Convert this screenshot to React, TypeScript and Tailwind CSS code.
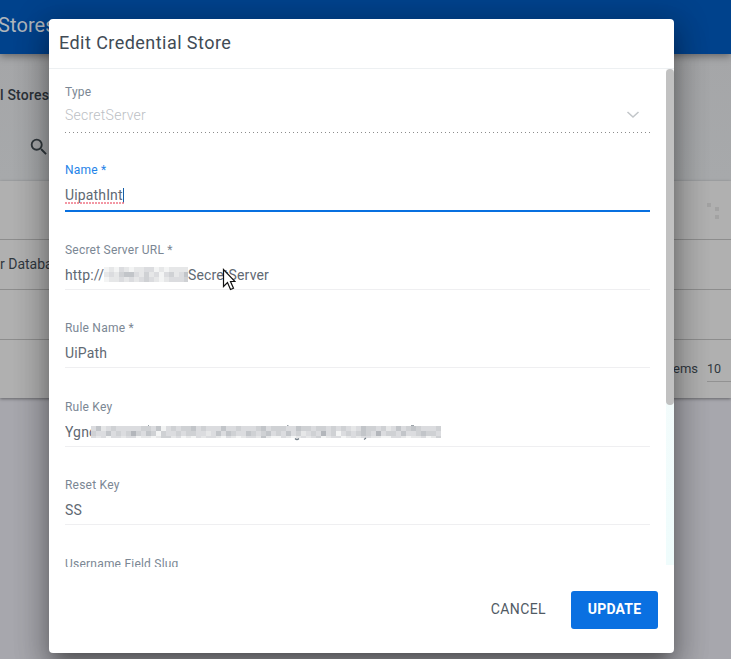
import type { ReactNode } from 'react';

const URL_TONES = [
  'fefdefeeddfefeeee',
  'edecbbdecedfdcedb',
  'feedededcdefedddc',
];

const KEY_TONES = [
  'dbedcdddddccdbfdcdccbdcdddbddcdddcbdcccddbccdccdcdcdedbccdcedbdcbcdddcef'.slice(0, 70),
  'cddbdcdcacdbcfcddcdccddedbdbcddbcdcbdcdbdcedcdadcfdcdcbcdadccdbddcbccddef'.slice(0, 70),
  'dedfddeddfeefeccedfefdeddefdefeddebeffdefededcfeddfededdeeffddefeedfeccef'.slice(0, 70),
];

const TONES: Record<string, string> = {
  a: '#b3b6bb',
  b: '#c2c5c9',
  c: '#cfd1d4',
  d: '#dbdcdf',
  e: '#e6e7e8',
  f: '#f3f4f4',
};

function Mosaic({ rows, width, height, className }: { rows: string[]; width: number; height: number; className: string }) {
  return (
    <svg className={className} width={width} height={height} shapeRendering="crispEdges">
      {rows.map((row, y) =>
        row.split('').map((tone, x) => <rect key={`${x}-${y}`} x={x * 5} y={y * 5} width="5" height="5" fill={TONES[tone]} />),
      )}
    </svg>
  );
}

function Field({
  label,
  children,
  labelClass = 'text-[#7b8794]',
  lineClass = 'h-[26px] border-b border-[#efeff1]',
  gapClass = 'mb-[30px]',
}: {
  label: ReactNode;
  children?: ReactNode;
  labelClass?: string;
  lineClass?: string;
  gapClass?: string;
}) {
  return (
    <div className={`shrink-0 ${gapClass}`}>
      <div className={`h-4 text-[12px] leading-4 tracking-[0.22px] ${labelClass}`}>{label}</div>
      <div className={`relative mt-[6px] flex text-[14px] leading-[22px] tracking-[0.15px] text-[#5f6973] ${lineClass}`}>
        {children}
      </div>
    </div>
  );
}

function Backdrop() {
  return (
    <div className="flex h-full flex-col bg-[#a7a7ad]">
      <header className="z-10 h-[54px] shrink-0 bg-[#00428c] pt-[11px] text-[20px] leading-7 tracking-[0.1px] text-[#afb5bb] shadow-[0_2px_8px_rgba(0,0,0,0.4)]">
        <span className="-ml-[2px]">Stores</span>
      </header>
      <div className="h-[127px] shrink-0 bg-gradient-to-b from-[#a5a6a8] to-[#a7a9ab]">
        <div className="pt-[31px] text-[14px] font-medium leading-5 tracking-[0.2px] text-[#2b3138]">l Stores</div>
        <svg className="ml-[28px] mt-[31px]" width="22" height="22" viewBox="0 0 24 24" fill="#30383d">
          <path d="M15.5 14h-.79l-.28-.27A6.47 6.47 0 0 0 16 9.5 6.5 6.5 0 1 0 9.5 16c1.61 0 3.09-.59 4.23-1.57l.27.28v.79l5 4.99L20.49 19l-4.99-5zm-6 0C7.01 14 5 11.99 5 9.5S7.01 5 9.5 5 14 7.01 14 9.5 11.99 14 9.5 14z" />
        </svg>
      </div>
      <div className="flex h-[217px] shrink-0 flex-col bg-[#b0b0b0] text-[#30383f] shadow-[0_1px_3px_rgba(0,0,0,0.4)]">
        <div className="flex h-[59px] shrink-0 justify-end border-b border-[#8d8d8d] pr-[11px] pt-[21px]">
          <svg width="14" height="20" viewBox="0 0 14 20" fill="#a2a2a2">
            <path d="M1 1h4v4H1zM9 5h4v4H9zM9 13h4v4H9z" />
          </svg>
        </div>
        <div className="h-[50px] shrink-0 border-b border-[#8d8d8d] pt-[14px] text-[14px] leading-5">r Databases</div>
        <div className="h-[50px] shrink-0 border-b border-[#8d8d8d]" />
        <div className="flex justify-end pt-[19px] text-[12px] leading-5">
          <span className="mr-[9px] text-[13px]">Items</span>
          <span className="h-[23px] w-[24px] border-b border-[#929292] text-[12.5px]">10</span>
        </div>
      </div>
    </div>
  );
}

export default function App() {
  return (
    <div className="relative h-[659px] w-[731px] overflow-hidden font-[Roboto,sans-serif]">
      <Backdrop />
      <section className="absolute left-[49px] top-[19px] z-20 flex h-[634px] w-[625px] flex-col rounded-[4px] bg-white shadow-[0_11px_15px_-7px_rgba(0,0,0,0.3),0_20px_32px_3px_rgba(0,0,0,0.22),0_4px_30px_8px_rgba(0,0,0,0.16)]">
        <h1 className="h-[50px] shrink-0 border-b border-[#edf0f2] pl-[10px] pt-[12px] text-[18px] font-normal leading-6 tracking-[0.45px] text-[#414b55]">
          Edit Credential Store
        </h1>
        <div className="flex h-[498px] shrink-0 overflow-hidden">
          <div className="flex w-[617px] flex-col overflow-hidden pl-4 pr-4 pt-[15px]">
            <Field label="Type" lineClass="h-[27px] justify-between text-[#bcc0c4]!" gapClass="mb-[29px]">
              <span className="-mt-[2px] font-light tracking-[0.25px]">SecretServer</span>
              <svg className="mr-[10px] mt-[4px]" width="14" height="10" viewBox="0 0 14 10" fill="none" stroke="#c2c6c9" strokeWidth="1.5">
                <path d="M1.5 2l5.5 5 5.5-5" />
              </svg>
              <svg className="absolute bottom-0 left-0" width="585" height="1" shapeRendering="crispEdges">
                <path d="M0 .5H585" stroke="#8c8c8c" strokeDasharray="1 3" />
              </svg>
            </Field>
            <Field label="Name *" labelClass="text-[#2583e8]" lineClass="h-[28px] border-b-2 border-[#0870e0]">
              <span className="relative">
                UipathInt
                <svg className="absolute left-0 top-[18px]" width="60" height="2" viewBox="0 0 60 2">
                  <path d="M0 1H60" stroke="#f07586" strokeWidth="1.5" strokeDasharray="2 1" />
                </svg>
              </span>
              <span className="mt-[4px] h-[15px] w-px bg-[#155fa8]" />
            </Field>
            <Field label="Secret Server URL *">
              <span className="w-[39px] shrink-0">http://</span>
              <Mosaic rows={URL_TONES} width={84} height={15} className="mt-[3px] shrink-0" />
              <span>SecretServer</span>
            </Field>
            <Field label="Rule Name *" gapClass="mb-[31px]">UiPath</Field>
            <Field label="Rule Key">
              <span className="w-[26px] overflow-hidden">Ygnc</span>
              <Mosaic rows={KEY_TONES} width={350} height={12} className="mt-[5px] shrink-0" />
              <svg className="absolute left-[26px] top-[4px]" width="350" height="16" fill="none" stroke="#77818a">
                <path d="M204 13.5q2 2 4 0M273 14.5l2-1.5" strokeWidth="1.2" />
                <path d="M57 .5h1M196 .5h1.5M320 .5h3" stroke="#9ca3a9" />
              </svg>
            </Field>
            <Field label="Reset Key" gapClass="mb-[31px]">SS</Field>
            <Field label="Username Field Slug" lineClass="h-[26px]" />
          </div>
          <div className="h-[496px] w-2 bg-gradient-to-b from-[#fafafa] to-[#effcfc]">
            <div className="h-[336px] rounded-full bg-[#c1c1c1]" />
          </div>
        </div>
        <footer className="flex h-[85px] items-start justify-end pr-4 pt-[24px]">
          <button className="mr-[25px] h-[37px] text-[14px] tracking-[0.4px] text-[#505a64]">CANCEL</button>
          <button className="h-[38px] w-[87px] rounded-[3px] bg-[#0a70e1] pb-[2px] text-[14px] font-bold tracking-[0.2px] text-white">UPDATE</button>
        </footer>
      </section>
      <svg className="absolute left-[222px] top-[268px] z-30" width="14" height="24" viewBox="0 0 14 24">
        <path d="M1.5 1.5v17l4-4 3 7 3-1.3-3-6.7h4.5z" fill="white" stroke="#111" strokeWidth="1.2" />
      </svg>
    </div>
  );
}
